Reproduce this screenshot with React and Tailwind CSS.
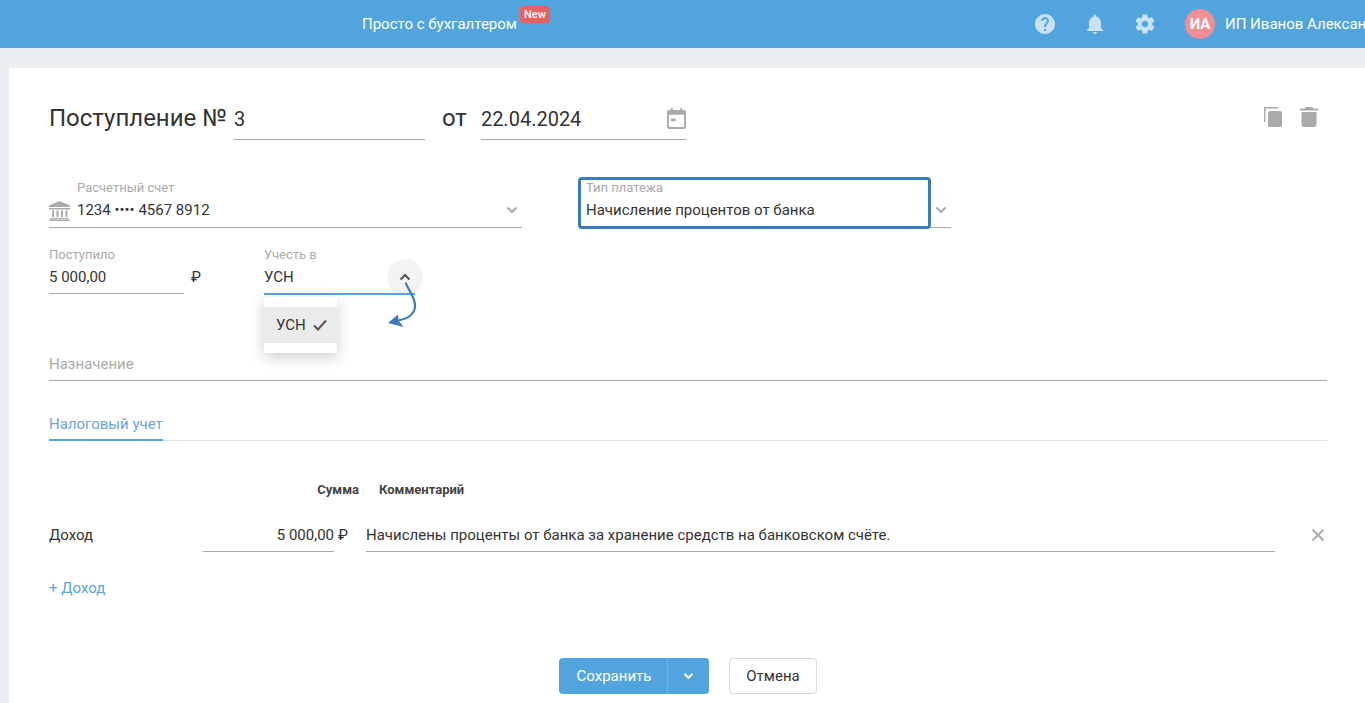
import React from "react";

const Chevron = ({ className, up }) => (
  <svg viewBox="0 0 12 8" className={className} fill="none" stroke="currentColor" strokeWidth="2.2">
    <path d={up ? "M1.5 6.5L6 2l4.5 4.5" : "M1.5 1.5L6 6l4.5-4.5"} />
  </svg>
);

const Header = () => (
  <header className="flex h-12 items-center bg-[#52a5dc] pl-[362px] text-white">
    <span className="text-[15px]">Просто с бухгалтером</span>
    <span className="mb-[19px] ml-[3px] rounded-[3px] bg-[#e86161] px-[4px] py-px text-[11px] leading-[15px] font-medium">
      New
    </span>
    <div className="ml-auto flex w-[338px] shrink-0 items-center overflow-hidden pl-[6px] whitespace-nowrap">
      <svg viewBox="0 0 24 24" className="h-6 w-6 shrink-0 fill-[#c8e1f5]">
        <path d="M12 2C6.48 2 2 6.48 2 12s4.48 10 10 10 10-4.48 10-10S17.52 2 12 2zm1 17h-2v-2h2v2zm2.07-7.75l-.9.92C13.45 12.9 13 13.5 13 15h-2v-.5c0-1.1.45-2.1 1.17-2.83l1.24-1.26c.37-.36.59-.86.59-1.41 0-1.1-.9-2-2-2s-2 .9-2 2H8c0-2.21 1.79-4 4-4s4 1.79 4 4c0 .88-.36 1.68-.93 2.25z" />
      </svg>
      <svg viewBox="0 0 24 24" className="ml-[26px] h-6 w-6 shrink-0 fill-[#c8e1f5]">
        <path d="M12 22c1.1 0 2-.9 2-2h-4c0 1.1.89 2 2 2zm6-6v-5c0-3.07-1.64-5.64-4.5-6.32V4c0-.83-.67-1.5-1.5-1.5s-1.5.67-1.5 1.5v.68C7.63 5.36 6 7.92 6 11v5l-2 2v1h16v-1l-2-2z" />
      </svg>
      <svg viewBox="0 0 24 24" className="ml-[26px] h-6 w-6 shrink-0 fill-[#c8e1f5]">
        <path d="M19.14 12.94c.04-.3.06-.61.06-.94 0-.32-.02-.64-.07-.94l2.03-1.58a.49.49 0 0 0 .12-.61l-1.92-3.32a.488.488 0 0 0-.59-.22l-2.39.96c-.5-.38-1.03-.7-1.62-.94l-.36-2.54a.484.484 0 0 0-.48-.41h-3.84c-.24 0-.43.17-.47.41l-.36 2.54c-.59.24-1.13.57-1.62.94l-2.39-.96c-.22-.08-.47 0-.59.22L2.74 8.87c-.12.21-.08.47.12.61l2.03 1.58c-.05.3-.09.63-.09.94s.02.64.07.94l-2.03 1.58a.49.49 0 0 0-.12.61l1.92 3.32c.12.22.37.29.59.22l2.39-.96c.5.38 1.03.7 1.62.94l.36 2.54c.05.24.24.41.48.41h3.84c.24 0 .44-.17.47-.41l.36-2.54c.59-.24 1.13-.56 1.62-.94l2.39.96c.22.08.47 0 .59-.22l1.92-3.32c.12-.22.07-.47-.12-.61l-2.01-1.58zM12 15.2c-1.77 0-3.2-1.43-3.2-3.2s1.43-3.2 3.2-3.2 3.2 1.43 3.2 3.2-1.43 3.2-3.2 3.2z" />
      </svg>
      <div className="ml-[28px] flex h-[30px] w-[30px] shrink-0 items-center justify-center rounded-full bg-[#f28f94] text-[15px] font-bold">
        ИА
      </div>
      <span className="ml-[10px] text-[15px]">ИП Иванов Александр</span>
    </div>
  </header>
);

const TitleRow = () => (
  <div className="flex h-[42px] items-end text-[#333]">
    <span className="mb-[6px] text-[24px] leading-8">Поступление №</span>
    <div className="ml-[7px] h-[42px] w-[191px] border-b border-[#aaa] text-[20px] leading-[42px]">3</div>
    <span className="mb-[6px] ml-[17px] text-[24px] leading-8">от</span>
    <div className="ml-[14px] flex h-[42px] w-[205px] items-center justify-between border-b border-[#aaa] text-[20px]">
      <span>22.04.2024</span>
      <svg viewBox="0 0 20 22" className="h-[21px] w-[19px] fill-[#aaa]">
        <path d="M4 0h2v2h8V0h2v2h2c1.1 0 2 .9 2 2v16c0 1.1-.9 2-2 2H2c-1.1 0-2-.9-2-2V4c0-1.1.9-2 2-2h2V0zM2 7v13h16V7H2zm2 4h5v3H4v-3z" />
      </svg>
    </div>
    <div className="mr-[9px] mb-[13px] ml-auto flex gap-[18px]">
      <svg viewBox="0 0 18 20" className="h-5 w-[18px] fill-[#aaa]">
        <path d="M0 0h14v1.5H1.5V15H0V0z" />
        <path d="M6 4h10c1.1 0 2 .9 2 2v12c0 1.1-.9 2-2 2H6c-1.1 0-2-.9-2-2V6c0-1.1.9-2 2-2z" />
      </svg>
      <svg viewBox="0 0 18 20" className="h-5 w-[18px] fill-[#aaa]">
        <path d="M6 0h6l1.5 1.5H18V3.5H0V1.5h4.5L6 0zM1.5 5h15v12.5c0 1.4-1.1 2.5-2.5 2.5H4c-1.4 0-2.5-1.1-2.5-2.5V5z" />
      </svg>
    </div>
  </div>
);

const AccountRow = () => (
  <div className="mt-10 flex text-[#333]">
    <div className="h-12 w-[473px] border-b border-[#aaa]">
      <div className="pl-7 text-[13px] leading-4 text-[#aaa]">Расчетный счет</div>
      <div className="mt-[4px] flex h-5 items-center text-[15px]">
        <svg viewBox="0 0 21 20" className="mt-[1px] mr-[7px] h-5 w-[21px] fill-[#aaa]">
          <path d="M10.5 0L21 4.5V6H0V4.5L10.5 0zM0 7h21v1.5H0V7zM3 9.5h2v6.5H3V9.5zm4.5 0h2v6.5h-2V9.5zm4.5 0h2v6.5h-2V9.5zm4.5 0h2v6.5h-2V9.5zM1.5 17h18v1H1.5v-1zM0 18.5h21V20H0v-1.5z" />
        </svg>
        <span>1234 •••• 4567 8912</span>
        <Chevron className="mr-[4px] ml-auto h-2 w-3 text-[#aaa]" />
      </div>
    </div>
    <div className="relative ml-[57px] h-12 w-[372px] border-b border-[#aaa]">
      <div className="pl-[7px] text-[13px] leading-4 text-[#aaa]">Тип платежа</div>
      <div className="mt-[4px] flex h-5 items-center pl-[7px] text-[15px]">
        <span>Начисление процентов от банка</span>
        <Chevron className="mr-[4px] ml-auto h-2 w-3 text-[#aaa]" />
      </div>
      {/* рамка фокуса поверх поля */}
      <div className="absolute top-[-3px] left-[-1px] h-[52px] w-[353px] rounded-[4px] border-[3px] border-[#3a7abf]" />
    </div>
  </div>
);

const AmountRow = () => (
  <div className="mt-[19px] flex text-[#333]">
    <div className="h-[47px] w-[135px] border-b border-[#aaa]">
      <div className="text-[13px] leading-4 text-[#aaa]">Поступило</div>
      <div className="mt-1 text-[15px] leading-5">5 000,00</div>
    </div>
    <div className="mt-5 ml-[7px] w-[73px] text-[15px] leading-5">₽</div>
    <div className="relative h-[48px] w-[151px]">
      <div className="text-[13px] leading-4 text-[#aaa]">Учесть в</div>
      <div className="mt-1 text-[15px] leading-5">УСН</div>
      <div className="absolute top-[12px] left-[123px] flex h-9 w-9 items-center justify-center rounded-full bg-[#f3f3f3]">
        <Chevron up className="h-2 w-3 text-[#555]" />
      </div>
      <div className="absolute right-0 bottom-0 left-0 h-[2px] bg-[#52a5dc]" />
      <div className="absolute top-[50px] left-0 w-[73px] bg-white py-[10px] shadow-[0_4px_14px_rgba(0,0,0,0.2)]">
        <div className="flex h-9 items-center bg-[#ebebeb] pl-3 text-[15px]">
          <span>УСН</span>
          <svg viewBox="0 0 14 12" className="ml-[7px] h-3 w-[14px]" fill="none" stroke="#555" strokeWidth="2">
            <path d="M1 6.5l4 4 8-9" />
          </svg>
        </div>
      </div>
      {/* стрелка-пометка */}
      <svg viewBox="0 0 40 50" className="absolute top-[33px] left-[120px] h-[50px] w-10 overflow-visible">
        <path d="M21.6 2.7C25 12 32 18 31 27c-.8 8-9 12-17 13.5" fill="none" stroke="#3a7abf" strokeWidth="2.2" />
        <path d="M4 43L14 34.5l.5 6 5 6.5z" fill="#3a7abf" />
      </svg>
    </div>
  </div>
);

const TaxRow = () => (
  <div className="flex h-[33px] text-[15px] text-[#333]">
    <div className="w-[154px] leading-8">Доход</div>
    <div className="h-[33px] w-[131px] border-b border-[#aaa] text-right leading-8">5 000,00</div>
    <div className="w-8 pl-1 leading-8">₽</div>
    <div className="h-[33px] w-[909px] border-b border-[#aaa] leading-8">
      Начислены проценты от банка за хранение средств на банковском счёте.
    </div>
    <svg viewBox="0 0 14 14" className="mt-[9px] ml-9 h-[14px] w-[14px]" fill="none" stroke="#aaa" strokeWidth="1.8">
      <path d="M1.5 1.5l11 11M12.5 1.5l-11 11" />
    </svg>
  </div>
);

const Buttons = () => (
  <div className="mt-[60px] flex pl-[510px] text-[15px]">
    <div className="flex h-9 w-[150px] rounded-[4px] bg-[#52a5dc] text-white">
      <div className="flex w-[109px] items-center justify-center border-r border-[#6fb5e3] pl-[2px]">Сохранить</div>
      <div className="flex flex-1 items-center justify-center">
        <Chevron className="h-2 w-[11px]" />
      </div>
    </div>
    <div className="ml-5 flex h-9 w-[88px] items-center justify-center rounded-[4px] border border-[#d9d9d9] text-[#333]">
      Отмена
    </div>
  </div>
);

export default function App() {
  return (
    <div className="h-[703px] overflow-hidden bg-[#ebeff2] font-[Roboto,sans-serif]">
      <Header />
      <main className="mt-5 ml-[9px] h-[635px] bg-white pt-[30px] pr-[38px] pl-10">
        <TitleRow />
        <AccountRow />
        <AmountRow />
        <div className="mt-[55px] h-[31px] border-b border-[#aaa] text-[15px] leading-7 text-[#aaa]">Назначение</div>
        <div className="mt-[27px] flex h-[33px] border-b border-[#e5e5e5]">
          <div className="h-[33px] border-b-2 border-[#52a5dc] text-[15px] leading-[32px] text-[#6ea4dc]">
            Налоговый учет
          </div>
        </div>
        <div className="mt-[41px] flex text-[13px] leading-4 font-bold text-[#444]">
          <div className="w-[310px] text-right">Сумма</div>
          <div className="ml-5">Комментарий</div>
        </div>
        <div className="mt-[21px]">
          <TaxRow />
        </div>
        <div className="mt-[26px] text-[15px] leading-5 text-[#5aa5dc]">+ Доход</div>
        <Buttons />
      </main>
    </div>
  );
}
